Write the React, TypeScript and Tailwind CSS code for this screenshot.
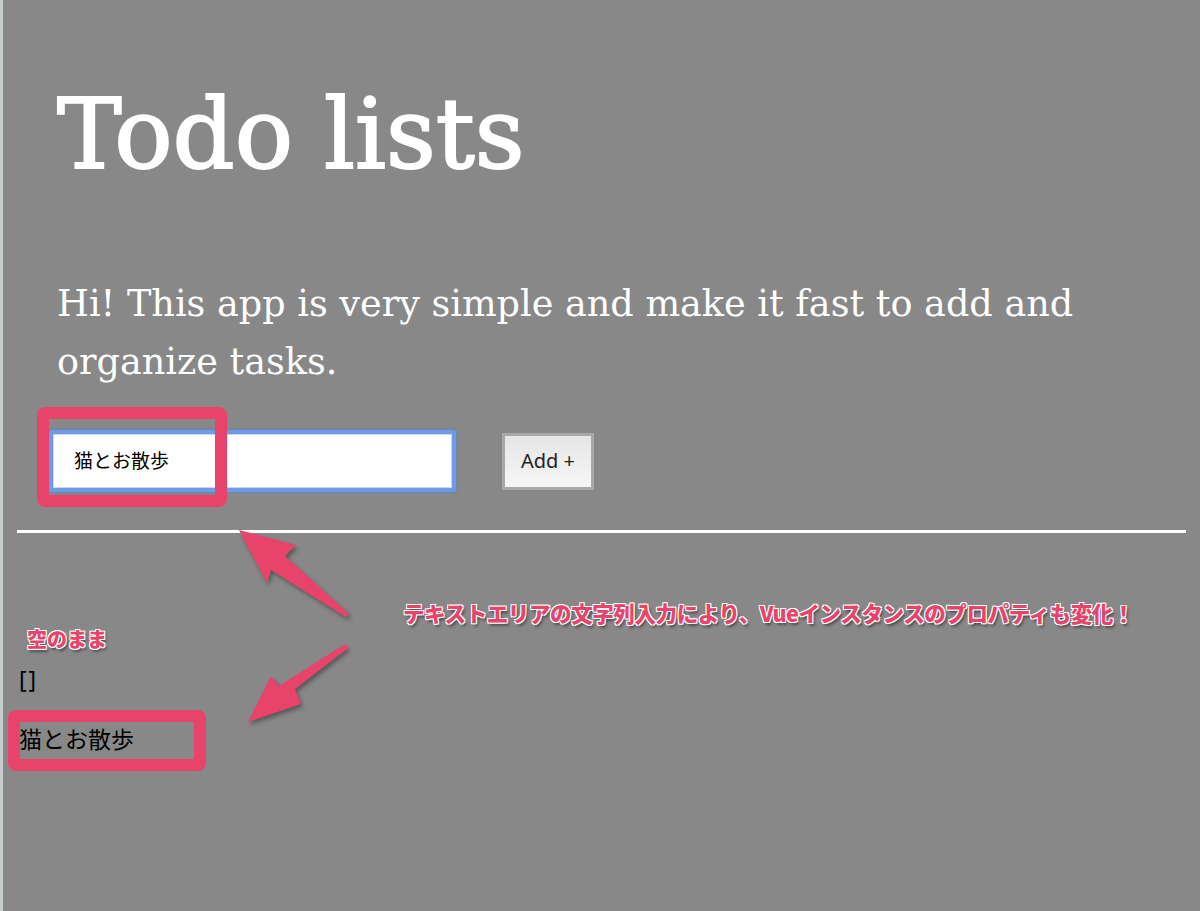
import React, { useState } from "react";

const serif = "font-['DejaVu_Serif','Liberation_Serif',serif]";
const jp = "font-['Noto_Sans','Noto_Sans_CJK_JP',sans-serif]";
const label =
  "font-['Noto_Sans_CJK_JP',sans-serif] font-black text-[#e8446b] [text-shadow:1px_1px_0_#fff,-1px_-1px_0_#fff,1px_-1px_0_#fff,-1px_1px_0_#fff,2px_3px_3px_rgba(0,0,0,0.45)]";

// annotation arrow drawn as a filled wedge with a soft shadow
function Arrow({ d }: { d: string }) {
  return (
    <path d={d} fill="#e8446b" style={{ filter: "drop-shadow(2px 3px 2px rgba(0,0,0,0.35))" }} />
  );
}

export default function App() {
  const [newItem, setNewItem] = useState("猫とお散歩");
  const [items] = useState<string[]>([]);

  return (
    <div className="relative min-h-[911px] overflow-hidden border-l-[3px] border-[#c7cccc] bg-[#888888]">
      {/* Header + intro */}
      <div className="pl-[54px] pr-6">
        <h1 className={`${serif} pt-[86px] text-[97px] leading-[1] text-white [-webkit-text-stroke:2px_white]`}>
          Todo lists
        </h1>
        <p className={`${serif} mt-[92px] max-w-[1040px] text-[36.6px] leading-[58px] text-white`}>
          Hi! This app is very simple and make it fast to add and organize tasks.
        </p>

        {/* Input row */}
        <div className="-ml-[8px] mt-[39px] flex items-center gap-[46px]">
          <div className="rounded-[3px] bg-[#6f9be6] p-[4px] shadow-[0_0_3px_#4a7fe0]">
            <div className="flex h-[54px] w-[399px] items-center border border-[#c8d8f5] bg-white px-[20px]">
              <input
                value={newItem}
                onChange={(e) => setNewItem(e.target.value)}
                className={`${jp} w-full bg-transparent text-[19px] text-black caret-black outline-none`}
              />
            </div>
          </div>
          <button
            className={`${jp} h-[57px] w-[92px] border-[3px] border-[#a9a9a9] bg-gradient-to-b from-[#e6e6e6] to-[#f6f6f6] text-[20px] text-[#222]`}
          >
            Add +
          </button>
        </div>
      </div>

      <hr className="mx-[14px] mt-[38px] border-t-[3px] border-white" />

      {/* Debug output */}
      <div className={`${jp} pl-[16px] text-black`}>
        <div className="mt-[133px] text-[23px] leading-[26px] tracking-[2px]">{JSON.stringify(items)}</div>
        <div className="mt-[34px] text-[23px] leading-[26px]">{newItem}</div>
      </div>

      {/* Annotation boxes */}
      <div className="absolute left-[34px] top-[407px] h-[100px] w-[190px] rounded-[8px] border-[12px] border-[#e8446b]" />
      <div className="absolute left-[5px] top-[710px] h-[61px] w-[198px] rounded-[8px] border-[12px] border-[#e8446b]" />

      {/* Annotation arrows */}
      <svg className="absolute left-0 top-0" width="1200" height="911" viewBox="0 0 1200 911">
        <Arrow d="M236 530 L293 545 L282 556 L346 614 L343 617 L268 570 L264 583 Z" />
        <Arrow d="M345 648 L292 689 L298 704 L245 722 L268 676 L276 686 L342 644 Z" />
      </svg>

      {/* Annotation labels */}
      <div className={`${label} absolute left-[400px] top-[597px] text-[21.5px] tracking-[-0.4px]`}>
        テキストエリアの文字列入力により、Vueインスタンスのプロパティも変化！
      </div>
      <div className={`${label} absolute left-[24px] top-[624px] text-[20px]`}>空のまま</div>
    </div>
  );
}
